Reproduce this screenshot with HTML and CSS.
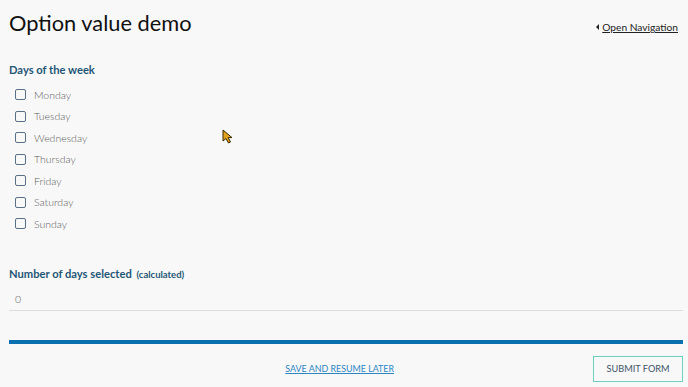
FILE: index.html
```html
<!DOCTYPE html>
<html lang="en">
<head>
<meta charset="utf-8">
<title>Option value demo</title>
<link rel="stylesheet" href="styles.css">
</head>
<body>
<div class="page">
  <header class="top">
    <h1 class="title">Option value demo</h1>
    <a class="nav-link" href="#"><span class="tri"></span><span class="nav-text">Open Navigation</span></a>
  </header>

  <section class="field">
    <h2 class="label">Days of the week</h2>
    <ul class="options">
      <li class="option"><span class="box"></span><span class="opt-text">Monday</span></li>
      <li class="option"><span class="box"></span><span class="opt-text">Tuesday</span></li>
      <li class="option"><span class="box"></span><span class="opt-text">Wednesday</span></li>
      <li class="option"><span class="box"></span><span class="opt-text">Thursday</span></li>
      <li class="option"><span class="box"></span><span class="opt-text">Friday</span></li>
      <li class="option"><span class="box"></span><span class="opt-text">Saturday</span></li>
      <li class="option"><span class="box"></span><span class="opt-text">Sunday</span></li>
    </ul>
  </section>

  <section class="field calc">
    <h2 class="label">Number of days selected <span class="small">(calculated)</span></h2>
    <div class="value">0</div>
  </section>

  <footer class="footer">
    <div class="actions">
      <a class="save" href="#">SAVE AND RESUME LATER</a>
      <button class="submit" type="button">SUBMIT FORM</button>
    </div>
  </footer>

  <svg class="cursor" width="12" height="16" viewBox="0 0 12 16" aria-hidden="true">
    <path d="M1 1 L1 12 L4 9.5 L6.5 14 L8.5 13 L6.2 8.6 L10 8.6 Z" fill="#e0a21e" stroke="#3a2a00" stroke-width="1" stroke-linejoin="round"/>
  </svg>
</div>
</body>
</html>
```

FILE: styles.css
```css
html, body {
  margin: 0;
  padding: 0;
  background: #f8f8f8;
}
body {
  font-family: Lato, "Open Sans", Arial, sans-serif;
  color: #222;
}
.page {
  position: relative;
  width: 688px;
  height: 387px;
  padding: 0 5px 0 9px;
  box-sizing: border-box;
}
.top {
  display: flex;
  justify-content: space-between;
  align-items: center;
  height: 48px;
}
.title {
  margin: 0;
  font-size: 21.8px;
  font-weight: 400;
  color: #111;
  line-height: 48px;
  position: relative;
  top: -1px;
}
.nav-link {
  display: flex;
  align-items: center;
  gap: 3px;
  color: #222;
  font-size: 10.2px;
  text-decoration: none;
  margin-right: 5px;
  position: relative;
  top: 3px;
}
.nav-text {
  text-decoration: underline;
}
.tri {
  width: 0;
  height: 0;
  border-top: 3px solid transparent;
  border-bottom: 3px solid transparent;
  border-right: 3px solid #222;
}
.field {
  margin-top: 14px;
}
.label {
  margin: 0;
  font-size: 11.2px;
  font-weight: 700;
  color: #1e5676;
  line-height: 16px;
}
.small {
  font-size: 9.5px;
  margin-left: 2px;
}
.options {
  list-style: none;
  margin: 6px 0 0;
  padding: 0 0 0 6px;
}
.option {
  display: flex;
  align-items: center;
  height: 21.5px;
}
.box {
  width: 9px;
  height: 9px;
  border: 1.3px solid #5a7086;
  border-radius: 2px;
  margin-right: 8px;
  box-sizing: content-box;
}
.opt-text {
  font-size: 10.5px;
  font-weight: 300;
  color: #5c5c5c;
}
.calc {
  margin-top: 31px;
}
.value {
  margin-top: 9px;
  padding: 0 0 4px 6px;
  font-size: 10.5px;
  font-weight: 300;
  color: #555;
  border-bottom: 1px solid #ddd;
  line-height: 14px;
}
.footer {
  margin-top: 29px;
  border-top: 4px solid #0a70b0;
}
.actions {
  display: flex;
  align-items: center;
  justify-content: flex-end;
  padding-top: 12px;
}
.save {
  font-size: 8.9px;
  color: #2c86c4;
  text-decoration: underline;
  margin-right: 199px;
}
.submit {
  width: 90px;
  height: 26px;
  background: #f8f8f8;
  border: 1.5px solid #6fd0c0;
  color: #3c5466;
  font-family: Lato, "Open Sans", Arial, sans-serif;
  font-size: 9.2px;
  padding: 0;
}
.cursor {
  position: absolute;
  left: 222px;
  top: 129px;
}
```
